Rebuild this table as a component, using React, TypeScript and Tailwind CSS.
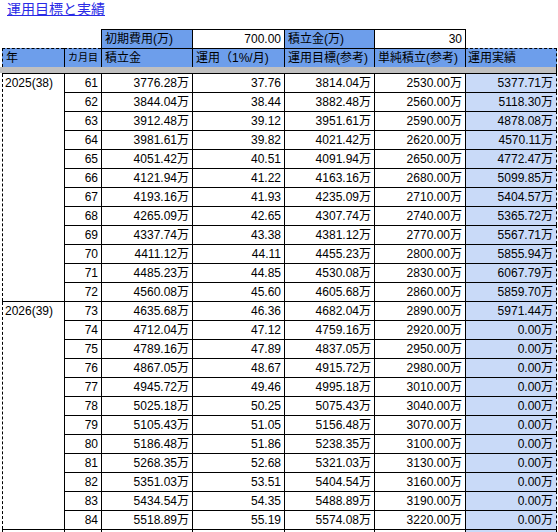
import React from 'react';

const FONT = { fontFamily: '"Liberation Sans", "Noto Sans CJK JP", Arial, sans-serif' };

const DATA: [number, string, string, string, string, string][] = [
  [61, '3776.28万', '37.76', '3814.04万', '2530.00万', '5377.71万'],
  [62, '3844.04万', '38.44', '3882.48万', '2560.00万', '5118.30万'],
  [63, '3912.48万', '39.12', '3951.61万', '2590.00万', '4878.08万'],
  [64, '3981.61万', '39.82', '4021.42万', '2620.00万', '4570.11万'],
  [65, '4051.42万', '40.51', '4091.94万', '2650.00万', '4772.47万'],
  [66, '4121.94万', '41.22', '4163.16万', '2680.00万', '5099.85万'],
  [67, '4193.16万', '41.93', '4235.09万', '2710.00万', '5404.57万'],
  [68, '4265.09万', '42.65', '4307.74万', '2740.00万', '5365.72万'],
  [69, '4337.74万', '43.38', '4381.12万', '2770.00万', '5567.71万'],
  [70, '4411.12万', '44.11', '4455.23万', '2800.00万', '5855.94万'],
  [71, '4485.23万', '44.85', '4530.08万', '2830.00万', '6067.79万'],
  [72, '4560.08万', '45.60', '4605.68万', '2860.00万', '5859.70万'],
  [73, '4635.68万', '46.36', '4682.04万', '2890.00万', '5971.44万'],
  [74, '4712.04万', '47.12', '4759.16万', '2920.00万', '0.00万'],
  [75, '4789.16万', '47.89', '4837.05万', '2950.00万', '0.00万'],
  [76, '4867.05万', '48.67', '4915.72万', '2980.00万', '0.00万'],
  [77, '4945.72万', '49.46', '4995.18万', '3010.00万', '0.00万'],
  [78, '5025.18万', '50.25', '5075.43万', '3040.00万', '0.00万'],
  [79, '5105.43万', '51.05', '5156.48万', '3070.00万', '0.00万'],
  [80, '5186.48万', '51.86', '5238.35万', '3100.00万', '0.00万'],
  [81, '5268.35万', '52.68', '5321.03万', '3130.00万', '0.00万'],
  [82, '5351.03万', '53.51', '5404.54万', '3160.00万', '0.00万'],
  [83, '5434.54万', '54.35', '5488.89万', '3190.00万', '0.00万'],
  [84, '5518.89万', '55.19', '5574.08万', '3220.00万', '0.00万'],
];

const YEARS: Record<number, string> = { 61: '2025(38)', 73: '2026(39)' };

const cell = 'h-[19px] leading-[18px] px-[3px] border-t border-l border-black whitespace-nowrap overflow-hidden';

const App: React.FC = () => {
  return (
    <div className="w-[558px] h-[532px] overflow-hidden bg-white text-[12px] text-black" style={FONT}>
      <div className="h-[29px] pl-[7px]">
        <a className="text-[14px] leading-[18px] text-[#2a2ae6] underline">運用目標と実績</a>
      </div>

      <div className="ml-[2px] w-[555px] grid grid-cols-[62px_37px_91px_92px_90px_91px_92px]">
        {/* top parameter row */}
        <div className="col-span-2 h-[19px]" />
        <div className={`${cell} bg-[#6d9eeb]`}>初期費用(万)</div>
        <div className={`${cell} text-right`}>700.00</div>
        <div className={`${cell} bg-[#6d9eeb]`}>積立金(万)</div>
        <div className={`${cell} text-right`}>30</div>
        <div className="h-[19px] border-l border-black" />

        {/* header row */}
        <div className="h-[19px] leading-[18px] px-[3px] border-t border-l border-dashed border-black bg-[#6d9eeb]">年</div>
        <div className="h-[19px] leading-[18px] px-[3px] border-t border-dashed border-black bg-[#6d9eeb] relative">
          <span className="absolute left-0 top-0 h-full border-l border-black" />
          <span className="text-[10px] float-right">カ月目</span>
        </div>
        <div className={`${cell} bg-[#6d9eeb]`}>積立金</div>
        <div className={`${cell} bg-[#6d9eeb]`}>運用（1%/月)</div>
        <div className={`${cell} bg-[#6d9eeb]`}>運用目標(参考)</div>
        <div className={`${cell} bg-[#6d9eeb]`}>単純積立(参考)</div>
        <div className="h-[19px] leading-[18px] px-[3px] border-t border-r border-dashed border-black bg-[#6d9eeb] relative">
          <span className="absolute left-0 top-0 h-full border-l border-black" />
          運用実績
        </div>

        {/* frozen divider */}
        <div className="col-span-7 h-[6px] -ml-[2px] bg-[#c0c0c0] border-r border-dashed border-black" />

        {/* data rows */}
        {DATA.map(([m, a, b, c, d, e]) => (
          <React.Fragment key={m}>
            {YEARS[m] && (
              <div className="row-span-12 leading-[18px] px-[3px] border-t border-black relative">
                <span className="absolute left-0 top-0 h-full border-l border-dashed border-black" />
                {YEARS[m]}
              </div>
            )}
            <div className={`${cell} col-start-2 text-right`}>{m}</div>
            <div className={`${cell} text-right`}>{a}</div>
            <div className={`${cell} text-right`}>{b}</div>
            <div className={`${cell} text-right`}>{c}</div>
            <div className={`${cell} text-right`}>{d}</div>
            <div className="h-[19px] leading-[18px] px-[3px] text-right border-t border-r border-black bg-[#c9daf8] relative" style={{ borderRightStyle: 'dashed' }}>
              <span className="absolute left-0 top-0 h-full border-l border-black" />
              {e}
            </div>
          </React.Fragment>
        ))}

        {/* next row, cut off by the window */}
        <div className="h-[19px] border-t border-black relative">
          <span className="absolute left-0 top-0 h-full border-l border-dashed border-black" />
        </div>
        <div className={cell} />
        <div className={cell} />
        <div className={cell} />
        <div className={cell} />
        <div className={cell} />
        <div className="h-[19px] border-t border-r border-black bg-[#c9daf8] relative" style={{ borderRightStyle: 'dashed' }}>
          <span className="absolute left-0 top-0 h-full border-l border-black" />
        </div>
      </div>
    </div>
  );
};

export default App;
